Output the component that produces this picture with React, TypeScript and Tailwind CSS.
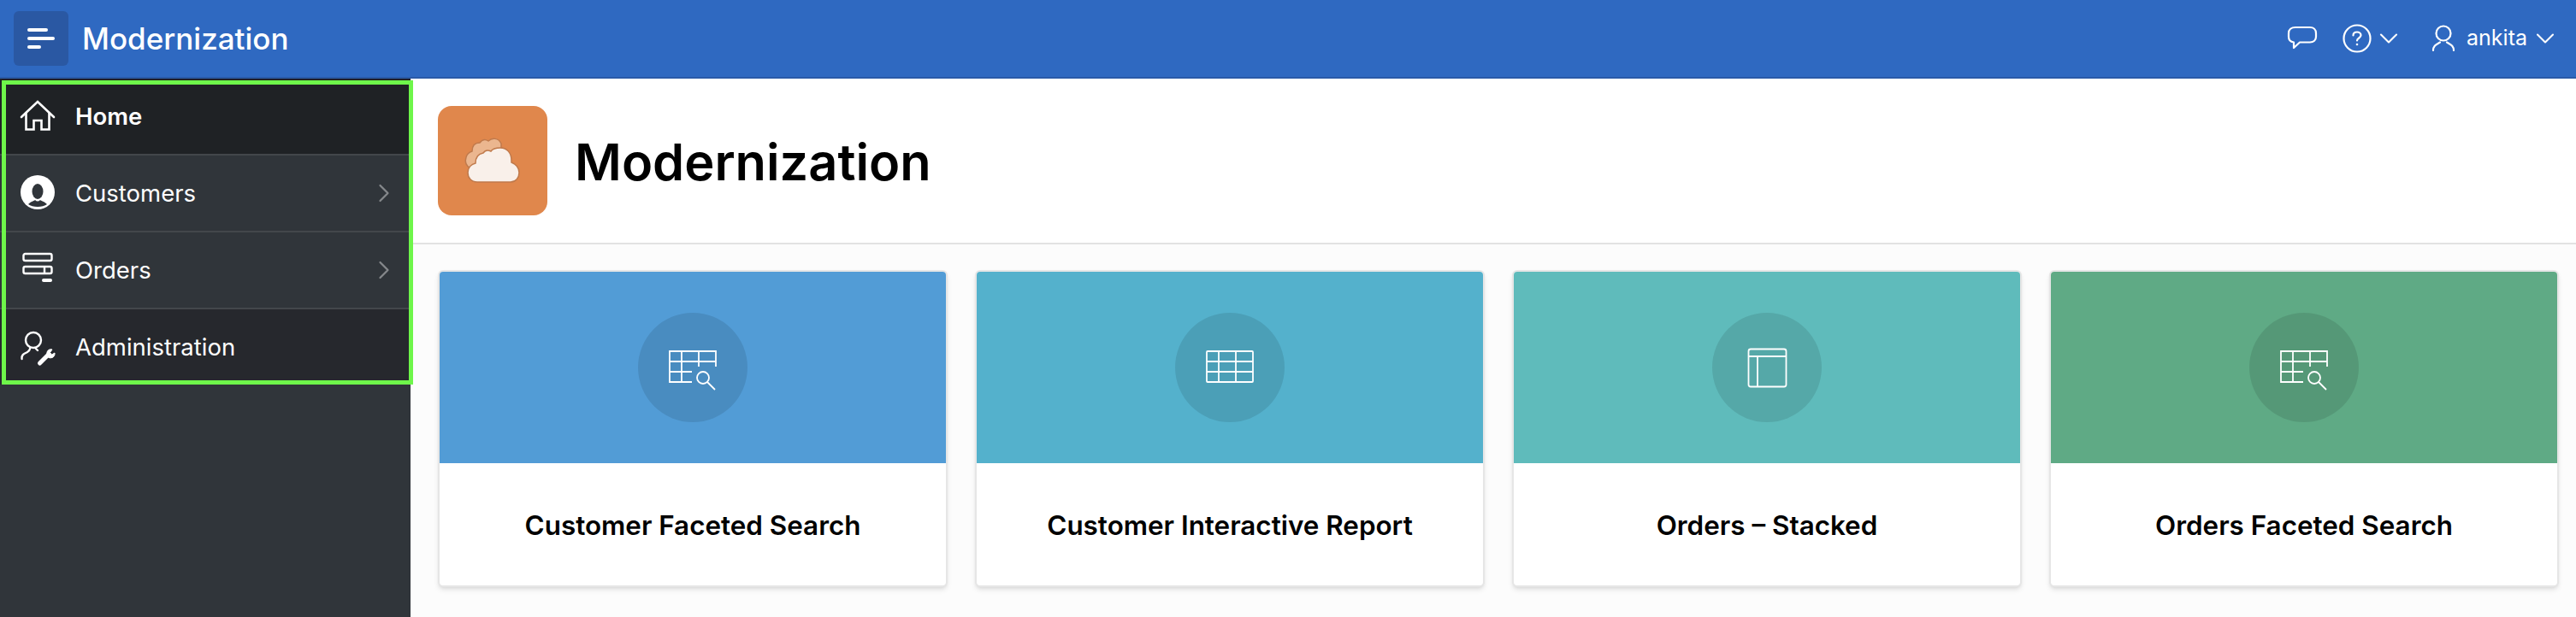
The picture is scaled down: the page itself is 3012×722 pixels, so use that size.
import React from "react";
import { ChevronRight, ChevronDown } from "lucide-react";

const font = "font-['Inter',sans-serif]";

const HomeIcon = () => (
  <svg width="48" height="48" viewBox="0 0 48 48" fill="none" stroke="#fff" strokeWidth="2.6" strokeLinecap="round">
    <path d="M5 25L24 7L43 25" />
    <path d="M10.5 20V39.5H19.5V29H28.5V39.5H37.5V20" />
  </svg>
);

const CustomerIcon = () => (
  <svg width="48" height="48" viewBox="0 0 48 48">
    <circle cx="24" cy="23" r="20" fill="#fff" />
    <ellipse cx="24" cy="22" rx="6.5" ry="9" fill="#30353a" />
    <path d="M13 37C16 34 20 33 21 32C23 34 25 34 27 32C28 33 32 34 35 37C30 41 18 41 13 37Z" fill="#30353a" />
  </svg>
);

const OrdersIcon = () => (
  <svg width="48" height="48" viewBox="0 0 48 48" fill="none" stroke="#fff" strokeWidth="2.4">
    <rect x="7.5" y="5" width="33" height="8" rx="2" />
    <rect x="7.5" y="20" width="33" height="8" rx="2" />
    <path d="M32 20V28" />
    <rect x="29" y="34" width="12" height="4" rx="2" fill="#fff" strokeWidth="0" />
  </svg>
);

const AdminIcon = () => (
  <svg width="48" height="48" viewBox="0 0 48 48" fill="none" stroke="#fff" strokeWidth="2.4" strokeLinecap="round">
    <circle cx="19" cy="16" r="9" />
    <path d="M5.5 38C5 33 8 32 12 30C14 29 15 27 15.5 25" />
    <path d="M21 25L24 28" />
    <path d="M26.5 43L37 32.5" strokeWidth="5" />
    <path d="M35 33C34 29 37 26 41 27L38.5 30.5L40.5 33L44 31C44.5 35 41 38 37 36.5Z" fill="#fff" strokeWidth="1" />
  </svg>
);

const ChatIcon = () => (
  <svg width="36" height="32" viewBox="0 0 36 32" fill="none" stroke="#fff" strokeWidth="2.2" strokeLinejoin="round">
    <path d="M10 3H27C31 3 34 5.5 34 10V14C34 18 31 20.5 27 20.5H15L8 27V20.5C4.5 20 2 17.5 2 14V10C2 5.5 5 3 10 3Z" />
  </svg>
);

const HelpIcon = () => (
  <svg width="34" height="34" viewBox="0 0 34 34" fill="none" stroke="#fff" strokeWidth="2.2" strokeLinecap="round">
    <circle cx="17" cy="17" r="15.5" />
    <path d="M12.5 13.5C12.5 10.8 14.5 9.5 17 9.5C19.5 9.5 21.5 11 21.5 13.3C21.5 16.5 17 16.5 17 19.5" />
    <circle cx="17" cy="24" r="1.3" fill="#fff" stroke="none" />
  </svg>
);

const UserIcon = () => (
  <svg width="28" height="32" viewBox="0 0 28 32" fill="none" stroke="#fff" strokeWidth="2.2" strokeLinecap="round">
    <circle cx="14" cy="10" r="8.5" />
    <path d="M2 30C2 24 6 23 10 20.5" />
    <path d="M26 30C26 24 22 23 18 20.5" />
  </svg>
);

const TableSearchIcon = () => (
  <svg width="64" height="64" viewBox="0 0 64 64" fill="none" stroke="#fff" strokeWidth="1.8">
    <path d="M31 49H5V13H59V31" />
    <path d="M5 25H59M5 37H31M19 13V49M39 13V31" />
    <circle cx="44" cy="44" r="7" />
    <path d="M49 49L58 58" />
  </svg>
);

const TableIcon = () => (
  <svg width="64" height="64" viewBox="0 0 64 64" fill="none" stroke="#fff" strokeWidth="1.8">
    <rect x="5" y="13" width="54" height="36" rx="1" />
    <path d="M5 25H59M5 37H59M19 13V49M39 13V49" />
  </svg>
);

const LayoutIcon = () => (
  <svg width="64" height="64" viewBox="0 0 64 64" fill="none" stroke="#fff" strokeWidth="1.8">
    <rect x="10.5" y="10.5" width="44" height="44" rx="2.5" />
    <path d="M10.5 19H54.5M21 19V54.5" />
  </svg>
);

const navItems = [
  { label: "Home", icon: <HomeIcon />, rowClass: "bg-[#1f2225] font-semibold h-[88px]", arrow: false },
  { label: "Customers", icon: <CustomerIcon />, rowClass: "bg-[#30353a] border-t-2 border-[#43474b] h-[90px]", arrow: true },
  { label: "Orders", icon: <OrdersIcon />, rowClass: "bg-[#30353a] border-t-2 border-[#43474b] h-[90px]", arrow: true },
  { label: "Administration", icon: <AdminIcon />, rowClass: "bg-[#26282d] border-t-2 border-[#43474b] h-[90px]", arrow: false },
];

const cards = [
  { title: "Customer Faceted Search", color: "bg-[#529cd6]", icon: <TableSearchIcon /> },
  { title: "Customer Interactive Report", color: "bg-[#54b1cc]", icon: <TableIcon /> },
  { title: "Orders – Stacked", color: "bg-[#5fbbbb]", icon: <LayoutIcon /> },
  { title: "Orders Faceted Search", color: "bg-[#5faa85]", icon: <TableSearchIcon /> },
];

export default function App() {
  return (
    <div className={`${font} w-[3012px] h-[722px] overflow-hidden flex flex-col bg-[#fcfcfc]`}>
      {/* Header */}
      <header className="h-[92px] shrink-0 bg-[#2f69c1] border-b-2 border-[#2a5aa8] flex items-center pl-4 pr-[18px] text-white">
        <button className="w-16 h-16 rounded-md bg-[#2a58a3] flex flex-col justify-center gap-[6px] pl-4">
          <span className="block w-6 h-1 rounded-full bg-white" />
          <span className="block w-8 h-1 rounded-full bg-white" />
          <span className="block w-4 h-1 rounded-full bg-white" />
        </button>
        <span className="ml-[16px] text-[35px] leading-none font-medium">Modernization</span>
        <div className="ml-auto flex items-center">
          <ChatIcon />
          <span className="ml-[29px]"><HelpIcon /></span>
          <ChevronDown size={36} strokeWidth={1.4} className="ml-[2px]" />
          <span className="ml-[32px]"><UserIcon /></span>
          <span className="ml-[13px] text-[25px]">ankita</span>
          <ChevronDown size={36} strokeWidth={1.4} className="ml-[3px]" />
        </div>
      </header>

      <div className="flex flex-1 min-h-0">
        {/* Sidebar */}
        <nav className="relative w-[480px] shrink-0 bg-[#30353a] text-white">
          {navItems.map((item) => (
            <div key={item.label} className={`flex items-center pl-5 pr-[13px] text-[27.5px] ${item.rowClass}`}>
              {item.icon}
              <span className="ml-[20px] flex-1 pt-[2px]">{item.label}</span>
              {item.arrow && <ChevronRight size={36} strokeWidth={1.5} className="text-[#85888b]" />}
            </div>
          ))}
          <div className="absolute left-[2px] top-[2px] w-[481px] h-[356px] border-[5px] border-[#6ef64a]" />
        </nav>

        {/* Main */}
        <main className="flex-1 min-w-0">
          <div className="h-[194px] bg-white border-b-2 border-[#e2e2e2] flex items-center pl-8">
            <div className="w-32 h-32 rounded-2xl bg-[#e0874c] shrink-0">
              <svg width="128" height="128" viewBox="0 0 128 128">
                <path d="M38 73C33 70 31 66 33 60C34 56 37 54 40 53C40 46 44 43 49 43C52 39 56 39 59 41C63 37 71 37 74 44L74 50L38 73Z" fill="#ebb68f" stroke="#c07a4c" strokeWidth="1.5" />
                <path d="M46 89C39 89 35 84 35 78C35 72 39 68 44 67C44 60 47 56 53 55C55 52 58 51 62 53C64 50 68 49 73 49C81 49 86 55 86 64L86 66C91 68 95 72 95 78C95 84 91 89 85 89Z" fill="#f9f0ea" stroke="#c07a4c" strokeWidth="1.5" />
              </svg>
            </div>
            <h1 className="ml-[32px] pt-[4px] text-[59.5px] leading-none font-semibold text-black">Modernization</h1>
          </div>
          <div className="grid grid-cols-[repeat(4,596px)] gap-x-[32px] pl-8 pt-[30px]">
            {cards.map((card) => (
              <div key={card.title} className="h-[371px] bg-white border-2 border-[#e6e6e6] rounded-md shadow-md overflow-hidden flex flex-col">
                <div className={`h-[224px] shrink-0 flex items-center justify-center ${card.color}`}>
                  <div className="w-32 h-32 rounded-full bg-black/10 flex items-center justify-center">{card.icon}</div>
                </div>
                <div className="flex-1 flex items-center justify-center pt-[4px] text-[31.4px] font-semibold text-black">{card.title}</div>
              </div>
            ))}
          </div>
        </main>
      </div>
    </div>
  );
}
